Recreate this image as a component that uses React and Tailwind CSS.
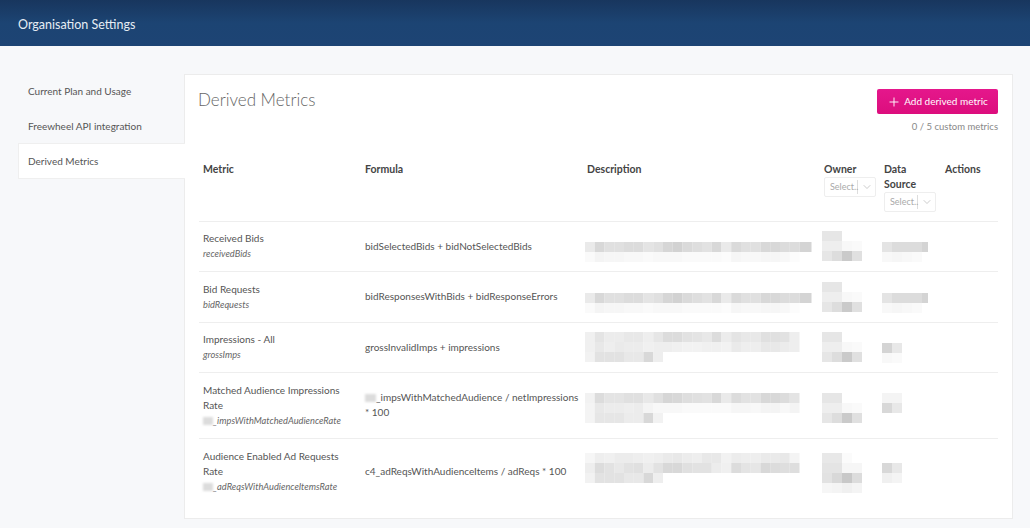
import React from 'react';
import { Plus, ChevronDown } from 'lucide-react';

// redacted areas in the picture: each row is a list of cell greys, '' = blank
function Mosaic({ rows, cell = 10, tail = 0 }) {
  const width = rows[0].length * cell;
  return (
    <svg width={width + tail} height={rows.length * 10} className="block blur-[0.6px] overflow-visible">
      {rows.map((row, y) =>
        row.map((c, x) => c && <rect key={x} x={x * cell} y={y * 10} width={cell} height={10} fill={'#' + c + c + c} />)
      )}
      {tail > 0 && <rect x={width} width={tail} height={10} fill="#d4d4d4" />}
    </svg>
  );
}

const descTwoRows = [
  ['ea', 'd8', 'e0', 'e0', 'dc', 'dc', 'e4', 'e0', 'd6', 'd2', 'da', 'de', 'e2', 'd8', 'ea', 'da', 'e0', 'e0', 'd8', 'd8', 'dc', 'dc'],
  ['fa', 'f4', 'f6', 'f6', 'f8', 'f8', 'fa', 'f8', 'f8', 'f8', 'fa', 'fa', 'fa', 'fa', 'fc', 'f6', 'f8', 'f8', 'f6', 'f6', 'f8', 'fc'],
];
const descThree = [
  ['f0', 'e4', 'ec', 'ec', 'e8', 'e8', 'ee', 'e6', 'dc', 'dc', 'e2', 'e4', 'e8', 'dc', 'ec', 'e4', 'e8', 'e8', 'e0', 'e0', 'e2', 'ee'],
  ['f0', 'e8', 'ee', 'ea', 'ec', 'ec', 'f0', 'ee', 'ee', 'f0', 'f2', 'f2', 'f0', 'f0', 'f2', 'ea', 'ee', 'ee', 'e8', 'e8', 'ec', 'ee'],
  ['f2', 'e2', 'e2', 'e2', 'e8', 'e8', 'd8', 'ee', '', '', '', '', '', '', '', '', '', '', '', '', '', ''],
];
const descFour = [
  ['f2', 'dc', 'e4', 'e4', 'e0', 'e0', 'e8', 'e0', 'd6', 'd8', 'de', 'e0', 'e2', 'd8', 'ea', 'dc', 'e2', 'e2', 'd8', 'd8', 'dc', 'e4'],
  ['f4', 'e8', 'ec', 'ec', 'ee', 'ec', 'f4', 'f8', 'f8', 'f8', 'fa', 'fa', 'fa', 'fa', 'fa', 'f6', 'f6', 'f8', 'f4', 'f4', 'f8', 'f4'],
  ['f4', 'e6', 'e6', 'e6', 'ec', 'ec', 'd8', 'f2', '', '', '', '', '', '', '', '', '', '', '', '', '', ''],
];
const descFive = [
  ['f6', 'ee', 'f0', 'ec', 'ec', 'ee', 'f0', 'ee', 'ea', 'e8', 'ec', 'ee', 'e8', 'e8', 'f2', 'ec', 'ee', 'ee', 'ea', 'ea', 'e8', 'f4'],
  ['ee', 'dc', 'e2', 'e8', 'e2', 'e0', 'ec', 'e2', 'd8', 'd8', 'e0', 'e2', 'e2', 'ec', 'f0', 'dc', 'e4', 'e6', 'd8', 'dc', 'de', 'de'],
  ['f2', 'e2', 'e2', 'e2', 'e8', 'e8', 'd8', 'ee', '', '', '', '', '', '', '', '', '', '', '', '', '', ''],
];
const owner = [
  ['e6', 'e6', '', ''],
  ['ee', 'ee', 'f8', 'fa'],
  ['e6', 'dd', 'ca', 'e0'],
];
const ownerTall = [
  ['e8', 'e8', 'fb', ''],
  ['e4', 'e4', 'f6', 'f6'],
  ['e2', 'd8', 'c8', 'dc'],
  ['f6', 'f4', 'f0', 'f4'],
];
const sourceLong = [
  ['e4', 'dc', 'dc', 'dc'],
  ['f8', 'f6', 'f8', 'fa'],
];

const metrics = [
  { name: 'Received Bids', id: 'receivedBids', formula: 'bidSelectedBids + bidNotSelectedBids', desc: descTwoRows, tail: 12, own: owner, src: sourceLong, srcTail: 6, h: 'h-[50px]', descPad: 'pt-[12px]', ownPad: '', srcPad: 'pt-[12px]' },
  { name: 'Bid Requests', id: 'bidRequests', formula: 'bidResponsesWithBids + bidResponseErrors', desc: descTwoRows, tail: 12, own: owner, src: sourceLong, srcTail: 6, h: 'h-[51px]', descPad: 'pt-[12px]', ownPad: '', srcPad: 'pt-[12px]' },
  { name: 'Impressions - All', id: 'grossImps', formula: 'grossInvalidImps + impressions', desc: descThree, own: owner, src: [['d4', 'e8'], ['f8', 'fa']], h: 'h-[50px]', descPad: '', ownPad: '', srcPad: 'pt-[12px]' },
  { name: 'Matched Audience Impressions Rate', id: '_impsWithMatchedAudienceRate', blurId: true, formula: '_impsWithMatchedAudience / netImpressions * 100', blurFormula: true, desc: descFour, own: owner, src: [['f4', 'f4'], ['d8', 'e8']], h: 'h-[66px]', descPad: 'pt-[6px]', ownPad: 'pt-[6px]', srcPad: 'pb-[4px]' },
  { name: 'Audience Enabled Ad Requests Rate', id: '_adReqsWithAudienceItemsRate', blurId: true, formula: 'c4_adReqsWithAudienceItems / adReqs * 100', desc: descFive, own: ownerTall, src: [['d8', 'e8'], ['f0', 'f4']], h: 'h-[66px]', descPad: 'pb-[6px]', ownPad: 'pt-[4px]', srcPad: 'pt-[4px]' },
];

function Smudge({ w }) {
  return <span className={`inline-block h-[8px] bg-[#dcdcdc] blur-[1px] align-[-1px] ${w}`} />;
}

function SelectBox() {
  return (
    <div className="flex items-center w-[52px] h-[20px] border border-[#eeeeee] rounded-[2px] bg-white">
      <span className="w-[33px] shrink-0 pl-[5px] text-[9px] text-[#aaaaaa] font-normal whitespace-nowrap border-r border-[#dddddd] leading-[14px]">Select..</span>
      <ChevronDown size={12} strokeWidth={1.2} className="ml-[3px] text-[#aaaaaa]" />
    </div>
  );
}

export default function App() {
  return (
    <div className="w-[1030px] h-[528px] overflow-hidden bg-[#f7f8fa] text-[#555555] font-['Lato',sans-serif]">
      {/* Header */}
      <header className="h-[46px] px-[18px] pt-[5px] flex items-center bg-gradient-to-b from-[#18365e] via-[#1c4473] to-[#1d4474] text-[#e6edf4] text-[12.5px]">
        Organisation Settings
      </header>

      <div className="flex items-start pt-[28px] pl-[18px]">
        {/* Side tabs */}
        <nav className="w-[166px] shrink-0 text-[10px]">
          <div className="h-[35px] pl-[10px] flex items-center">Current Plan and Usage</div>
          <div className="h-[34px] pl-[10px] flex items-center">Freewheel API integration</div>
          <div className="h-[36px] pl-[9px] flex items-center bg-white border border-r-0 border-[#efefef] relative z-10 -mr-px">Derived Metrics</div>
        </nav>

        {/* Panel */}
        <main className="w-[829px] h-[445px] bg-white border border-[#ececec] pl-[13px] pr-[14px]">
          <div className="flex justify-between items-start pt-[14px] h-[70px]">
            <h1 className="text-[17px] font-light text-[#666666] leading-[22px]">Derived Metrics</h1>
            <div className="flex flex-col items-end">
              <button className="w-[121px] h-[25px] flex items-center justify-center gap-[3px] rounded-[2px] text-white text-[10px] bg-gradient-to-b from-[#e5178c] to-[#dc0d7d]">
                <Plus size={14} strokeWidth={1.6} />
                Add derived metric
              </button>
              <div className="mt-[6px] text-[9.5px] text-[#888888]">0 / 5 custom metrics</div>
            </div>
          </div>

          <table className="ml-px w-[799px] table-fixed border-collapse text-[10px]">
            <colgroup>
              <col className="w-[162px]" />
              <col className="w-[222px]" />
              <col className="w-[237px]" />
              <col className="w-[60px]" />
              <col className="w-[61px]" />
              <col className="w-[57px]" />
            </colgroup>
            <thead>
              <tr className="h-[76px] align-top text-left text-[10.5px] font-bold text-[#444444] leading-[15px]">
                <th className="pl-[4px] pt-[17px]">Metric</th>
                <th className="pl-[4px] pt-[17px]">Formula</th>
                <th className="pl-[4px] pt-[17px]">Description</th>
                <th className="pl-[4px] pt-[17px]">
                  Owner
                  <SelectBox />
                </th>
                <th className="pl-[4px] pt-[17px]">
                  Data
                  <br />
                  Source
                  <SelectBox />
                </th>
                <th className="pl-[4px] pt-[17px]">Actions</th>
              </tr>
            </thead>
            <tbody>
              {metrics.map((m) => (
                <tr key={m.name} className={`${m.h} border-t border-[#eeeeee]`}>
                  <td className="pl-[4px] leading-[15px]">
                    <div>{m.name}</div>
                    <div className="text-[9.25px] italic text-[#666666]">
                      {m.blurId && <Smudge w="w-[10px]" />}
                      {m.id}
                    </div>
                  </td>
                  <td className="pl-[4px] leading-[15px]">
                    {m.blurFormula && <Smudge w="w-[11px]" />}
                    {m.formula}
                  </td>
                  <td className={`pl-[2px] ${m.descPad}`}><Mosaic rows={m.desc} cell={9.75} tail={m.tail} /></td>
                  <td className={`pl-[2px] ${m.ownPad}`}><Mosaic rows={m.own} /></td>
                  <td className={`pl-[2px] ${m.srcPad}`}><Mosaic rows={m.src} tail={m.srcTail} /></td>
                  <td />
                </tr>
              ))}
            </tbody>
          </table>
        </main>
      </div>
    </div>
  );
}
